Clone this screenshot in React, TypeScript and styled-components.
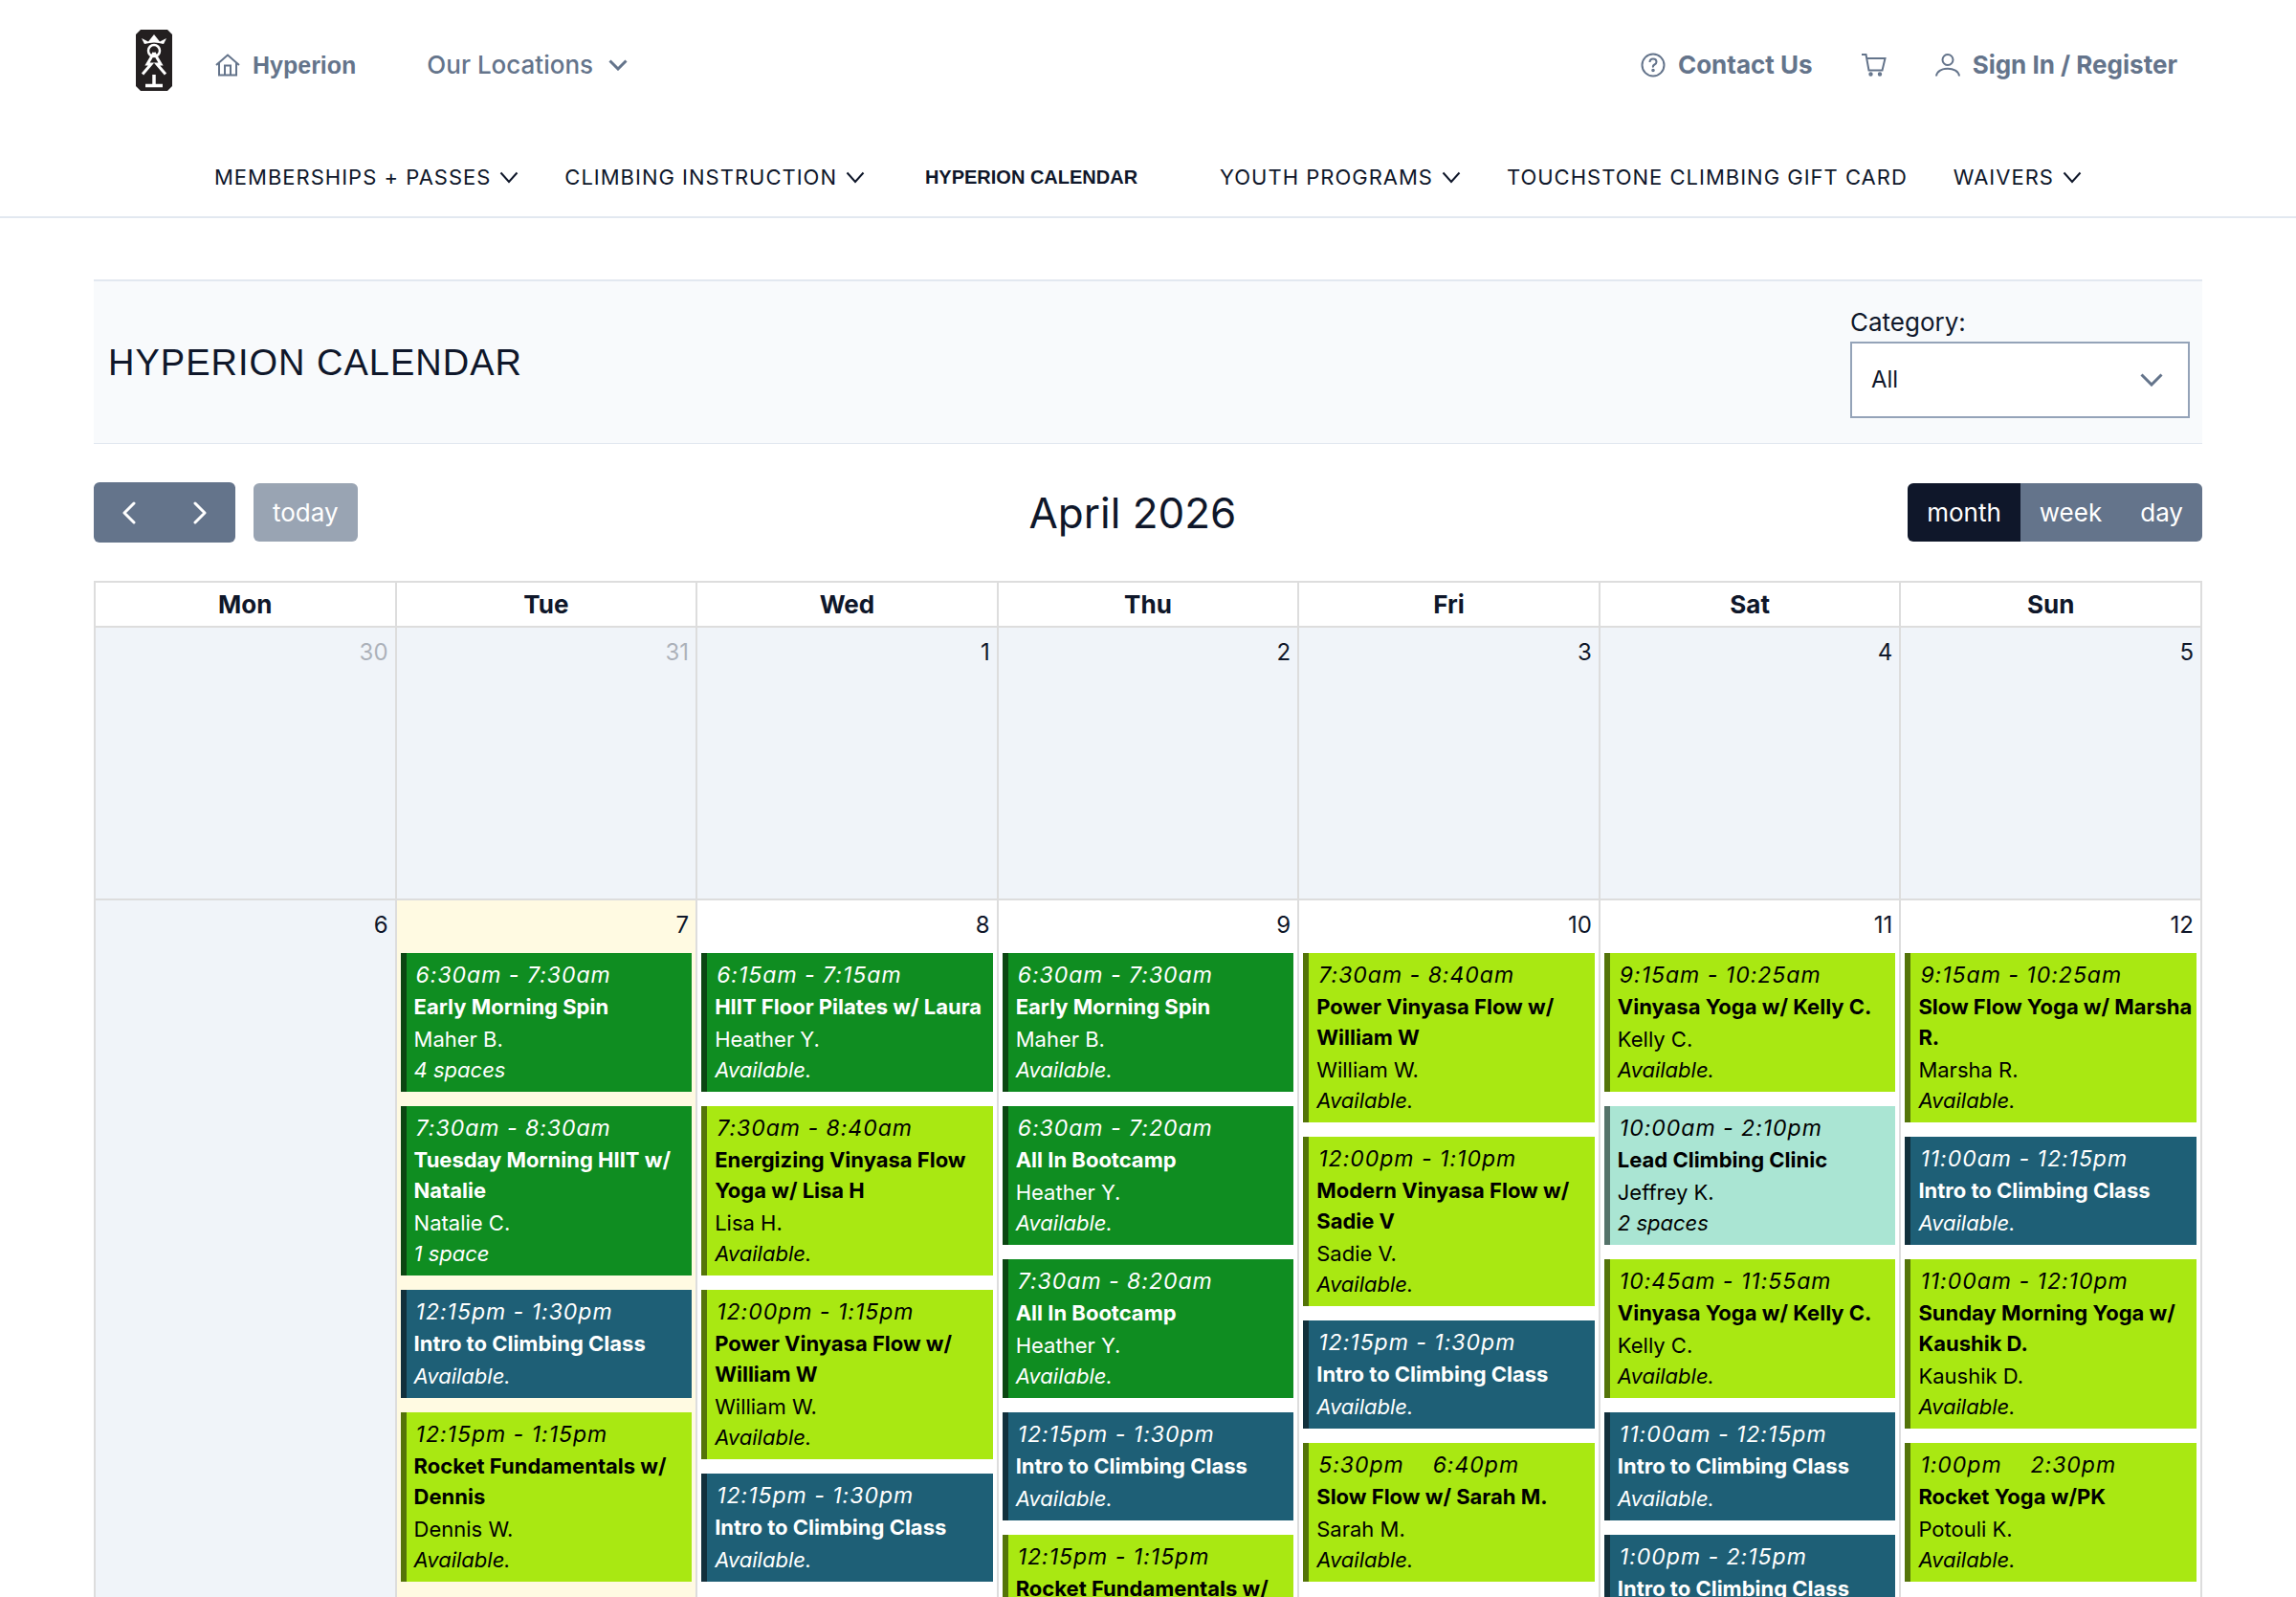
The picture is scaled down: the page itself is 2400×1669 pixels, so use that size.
import React from "react";
import styled, { createGlobalStyle } from "styled-components";

const INK = "#0f172a";
const SLATE = "#64748b";
const LINE = "#dddddd";

const GlobalStyle = createGlobalStyle`
  *, *::before, *::after { box-sizing: border-box; }
  body {
    margin: 0;
    background: #fff;
    color: ${INK};
    font-family: Inter, "Liberation Sans", sans-serif;
    font-size: 24px;
    line-height: 32px;
  }
  button, select { font: inherit; }
  a { color: inherit; text-decoration: none; }
`;

const Page = styled.div`
  height: 100vh;
  overflow: hidden;
`;

const Header = styled.header`
  border-bottom: 2px solid #e2e8f0;
`;

const TopBar = styled.div`
  display: flex;
  align-items: center;
  padding: 31px 124px 0 142px;
  color: ${SLATE};
  font-size: 26px;
`;

const LogoLink = styled.a`
  display: flex;
  margin-right: 45px;
`;

const TopGroup = styled.div<{ $gap: number; $end?: boolean }>`
  display: flex;
  align-items: center;
  gap: ${(p) => p.$gap}px;
  margin-left: ${(p) => (p.$end ? "auto" : "0")};
  padding-top: 10px;
`;

const TopLink = styled.a<{ $weight: number }>`
  display: inline-flex;
  align-items: center;
  gap: 13px;
  font-weight: ${(p) => p.$weight};
`;

const SiteLink = styled(TopLink)`
  font-family: "Liberation Sans", Arial, sans-serif;
  font-size: 25px;
`;

const LocationsButton = styled.button`
  display: inline-flex;
  align-items: center;
  gap: 16px;
  padding: 0;
  border: 0;
  background: none;
  color: inherit;
  font-weight: 500;
`;

const Nav = styled.nav`
  display: flex;
  justify-content: space-between;
  align-items: center;
  padding: 74px 224px 25px;
`;

const NavItem = styled.a`
  display: inline-flex;
  align-items: center;
  gap: 9px;
  font-size: 22px;
  letter-spacing: 1px;
  white-space: nowrap;
`;

const CurrentNavItem = styled(NavItem)`
  padding: 0 38px 0 15px;
  font-family: "Liberation Sans", Arial, sans-serif;
  font-size: 20px;
  font-weight: 700;
  letter-spacing: 0;
`;

const Main = styled.main`
  padding: 64px 98px 0;
`;

const TitleBar = styled.section`
  display: flex;
  align-items: center;
  justify-content: space-between;
  padding: 26px 13px 26px 15px;
  border-top: 2px solid #e2e8f0;
  border-bottom: 1px solid #e2e8f0;
  background: #f8fafc;
`;

const PageTitle = styled.h1`
  margin: 0;
  font-family: "Liberation Sans", Arial, sans-serif;
  font-size: 38px;
  font-weight: 400;
  line-height: 48px;
  letter-spacing: 1px;
`;

const Field = styled.div`
  display: flex;
  flex-direction: column;
  width: 355px;
`;

const FieldLabel = styled.label`
  padding: 1px 0 4px;
  font-size: 26px;
`;

const SelectWrap = styled.div`
  display: grid;
  align-items: center;
  color: ${SLATE};
  & > * { grid-area: 1 / 1; }
  & > svg { justify-self: end; margin-right: 28px; pointer-events: none; }
`;

const Select = styled.select`
  appearance: none;
  width: 100%;
  height: 80px;
  padding: 0 20px;
  border: 2px solid #94a3b8;
  border-radius: 0;
  background: #fff;
  color: ${INK};
`;

const Toolbar = styled.div`
  display: flex;
  align-items: center;
  justify-content: space-between;
  padding: 40px 0;
`;

const ToolGroup = styled.div`
  display: flex;
  align-items: center;
  gap: 19px;
`;

const ButtonGroup = styled.div`
  display: flex;
  overflow: hidden;
  border-radius: 6px;
`;

const ToolButton = styled.button<{ $active?: boolean }>`
  display: flex;
  align-items: center;
  height: 61px;
  padding: 0 20px;
  border: 0;
  background: ${(p) => (p.$active ? INK : SLATE)};
  color: #fff;
  font-size: 26px;
`;

const ArrowButton = styled(ToolButton)`
  height: 63px;
  justify-content: center;
  width: 74px;
`;

const TodayButton = styled(ToolButton)`
  border-radius: 6px;
  opacity: 0.65;
`;

const MonthTitle = styled.h2`
  margin: 0;
  font-size: 44px;
  font-weight: 400;
  line-height: 56px;
`;

const Calendar = styled.table`
  width: 100%;
  table-layout: fixed;
  border-collapse: collapse;
`;

const HeadCell = styled.th`
  height: 47px;
  padding: 0;
  border: 2px solid ${LINE};
  font-size: 26px;
  font-weight: 700;
`;

type Tone = "muted" | "today" | "plain";
const toneColor: Record<Tone, string> = {
  muted: "#f0f4f9",
  today: "#fffae2",
  plain: "#ffffff",
};

const DayCell = styled.td<{ $tone: Tone }>`
  height: 285px;
  padding: 4px 4px 0;
  border: 2px solid ${LINE};
  background: ${(p) => toneColor[p.$tone]};
  vertical-align: top;
`;

const DayNumber = styled.div<{ $outside?: boolean }>`
  padding: 6px 3px 13px;
  text-align: right;
  opacity: ${(p) => (p.$outside ? 0.3 : 1)};
`;

const EventList = styled.div`
  display: flex;
  flex-direction: column;
  gap: 15px;
`;

type Kind = "fitness" | "yoga" | "climb" | "clinic";
const kinds: Record<Kind, { bg: string; edge: string; fg: string }> = {
  fitness: { bg: "#0f8d21", edge: "#0c4612", fg: "#fff" },
  yoga: { bg: "#a9e812", edge: "#547409", fg: "#000" },
  climb: { bg: "#1e5f76", edge: "#12303c", fg: "#fff" },
  clinic: { bg: "#aae5d3", edge: "#55736a", fg: "#000" },
};

const EventCard = styled.a<{ $kind: Kind }>`
  display: block;
  padding: 7px 0 7px 8px;
  border-left: 6px solid ${(p) => kinds[p.$kind].edge};
  background: ${(p) => kinds[p.$kind].bg};
  color: ${(p) => kinds[p.$kind].fg};
  font-size: 22px;
`;

const EventTime = styled.div`
  padding-left: 2px;
  font-size: 23px;
  line-height: 33px;
  font-style: italic;
  letter-spacing: 1px;
`;

const EventTitle = styled.div`
  padding-bottom: 2px;
  font-weight: 700;
`;

const EventText = styled.div``;

const EventSpaces = styled.div`
  font-style: italic;
`;

type Ev = { k: Kind; time: string; title: string; who?: string; left?: string };

const e = (k: Kind, time: string, title: string, who?: string, left = "Available."): Ev => ({
  k, time, title, who, left,
});

type Day = { n: number; tone: Tone; outside?: boolean; events?: Ev[] };

const INTRO = "Intro to Climbing Class";

const weeks: Day[][] = [
  [
    { n: 30, tone: "muted", outside: true },
    { n: 31, tone: "muted", outside: true },
    { n: 1, tone: "muted" },
    { n: 2, tone: "muted" },
    { n: 3, tone: "muted" },
    { n: 4, tone: "muted" },
    { n: 5, tone: "muted" },
  ],
  [
    { n: 6, tone: "muted" },
    {
      n: 7,
      tone: "today",
      events: [
        e("fitness", "6:30am - 7:30am", "Early Morning Spin", "Maher B.", "4 spaces"),
        e("fitness", "7:30am - 8:30am", "Tuesday Morning HIIT w/ Natalie", "Natalie C.", "1 space"),
        e("climb", "12:15pm - 1:30pm", INTRO),
        e("yoga", "12:15pm - 1:15pm", "Rocket Fundamentals w/ Dennis", "Dennis W."),
      ],
    },
    {
      n: 8,
      tone: "plain",
      events: [
        e("fitness", "6:15am - 7:15am", "HIIT Floor Pilates w/ Laura", "Heather Y."),
        e("yoga", "7:30am - 8:40am", "Energizing Vinyasa Flow Yoga w/ Lisa H", "Lisa H."),
        e("yoga", "12:00pm - 1:15pm", "Power Vinyasa Flow w/ William W", "William W."),
        e("climb", "12:15pm - 1:30pm", INTRO),
      ],
    },
    {
      n: 9,
      tone: "plain",
      events: [
        e("fitness", "6:30am - 7:30am", "Early Morning Spin", "Maher B."),
        e("fitness", "6:30am - 7:20am", "All In Bootcamp", "Heather Y."),
        e("fitness", "7:30am - 8:20am", "All In Bootcamp", "Heather Y."),
        e("climb", "12:15pm - 1:30pm", INTRO),
        e("yoga", "12:15pm - 1:15pm", "Rocket Fundamentals w/ Dennis", "Dennis W."),
      ],
    },
    {
      n: 10,
      tone: "plain",
      events: [
        e("yoga", "7:30am - 8:40am", "Power Vinyasa Flow w/ William W", "William W."),
        e("yoga", "12:00pm - 1:10pm", "Modern Vinyasa Flow w/ Sadie V", "Sadie V."),
        e("climb", "12:15pm - 1:30pm", INTRO),
        e("yoga", "5:30pm\u00a0\u00a0\u00a0 6:40pm", "Slow Flow w/ Sarah M.", "Sarah M."),
      ],
    },
    {
      n: 11,
      tone: "plain",
      events: [
        e("yoga", "9:15am - 10:25am", "Vinyasa Yoga w/ Kelly C.", "Kelly C."),
        e("clinic", "10:00am - 2:10pm", "Lead Climbing Clinic", "Jeffrey K.", "2 spaces"),
        e("yoga", "10:45am - 11:55am", "Vinyasa Yoga w/ Kelly C.", "Kelly C."),
        e("climb", "11:00am - 12:15pm", INTRO),
        e("climb", "1:00pm - 2:15pm", INTRO),
      ],
    },
    {
      n: 12,
      tone: "plain",
      events: [
        e("yoga", "9:15am - 10:25am", "Slow Flow Yoga w/ Marsha R.", "Marsha R."),
        e("climb", "11:00am - 12:15pm", INTRO),
        e("yoga", "11:00am - 12:10pm", "Sunday Morning Yoga w/ Kaushik D.", "Kaushik D."),
        e("yoga", "1:00pm\u00a0\u00a0\u00a0 2:30pm", "Rocket Yoga w/PK", "Potouli K."),
      ],
    },
  ],
];

const Stroke = styled.svg<{ $w?: number }>`
  flex: none;
  fill: none;
  stroke: currentColor;
  stroke-width: ${(p) => p.$w ?? 2};
`;

const Logo = () => (
  <svg width="38" height="64" viewBox="0 0 38 64" aria-hidden="true">
    <path d="M5 0H33L38 5V59L33 64H5L0 59V5Z" fill="#231f20" />
    <path d="M6 9L13 12.500L19 5L25 12.500L32 9L29 15Q19 12 9 15Z" fill="#fff" />
    <g fill="none" stroke="#fff">
      <circle cx="19" cy="22" r="6" strokeWidth="2.500" />
      <path d="M19 24L12 36H16L7 46.500M19 24L26 36H22L31 46.500" strokeWidth="3" />
      <path d="M19 47V58M10 58.500H28" strokeWidth="3.500" />
    </g>
  </svg>
);

const HomeIcon = () => (
  <Stroke width="26" height="24" viewBox="0 0 26 24" aria-hidden="true">
    <path d="M1 12L13 1.500L25 12M4 9.500V22.500H22V9.500M10 22V12.500H16V22" />
  </Stroke>
);

const HelpIcon = () => (
  <Stroke width="26" height="26" viewBox="0 0 26 26" aria-hidden="true">
    <circle cx="13" cy="13" r="11.500" />
    <path d="M9.500 10Q9.500 6.500 13 6.500T16.500 9.800Q16.500 11.500 14.500 12.500T13 15.500" />
    <circle cx="13" cy="18.500" r="0.800" />
  </Stroke>
);

const CartIcon = () => (
  <Stroke width="26" height="24" viewBox="0 0 26 24" aria-hidden="true">
    <path d="M0 1H4.500L7.500 17.500H21.500L24.500 5H5.500" />
    <circle cx="9.500" cy="21.500" r="1.200" />
    <circle cx="19" cy="21.500" r="1.200" />
  </Stroke>
);

const UserIcon = () => (
  <Stroke width="26" height="24" viewBox="0 0 26 24" aria-hidden="true">
    <circle cx="13" cy="6.500" r="5.500" />
    <path d="M1 23.500C2 13 24 13 25 23.500" />
  </Stroke>
);

const Down = ({ w, h, s }: { w: number; h: number; s: number }) => (
  <Stroke $w={s} width={w} height={h} viewBox={`0 0 ${w} ${h}`} aria-hidden="true">
    <path d={`M1.500 1.500L${w / 2} ${h - 2}L${w - 1.5} 1.500`} />
  </Stroke>
);

const Side = ({ next }: { next?: boolean }) => (
  <Stroke $w={3} width="14" height="24" viewBox="0 0 14 24" strokeLinecap="round" strokeLinejoin="round" aria-hidden="true">
    <path d={next ? "M2 2L12 12L2 22" : "M12 2L2 12L12 22"} />
  </Stroke>
);

const navItems = [
  { label: "MEMBERSHIPS + PASSES", menu: true },
  { label: "CLIMBING INSTRUCTION", menu: true },
  { label: "HYPERION CALENDAR", current: true },
  { label: "YOUTH PROGRAMS", menu: true },
  { label: "TOUCHSTONE CLIMBING GIFT CARD" },
  { label: "WAIVERS", menu: true },
];

export default function App() {
  return (
    <Page>
      <GlobalStyle />
      <Header>
        <TopBar>
          <LogoLink href="#" aria-label="Touchstone"><Logo /></LogoLink>
          <TopGroup $gap={74}>
            <SiteLink href="#" $weight={700}><HomeIcon />Hyperion</SiteLink>
            <LocationsButton type="button">Our Locations<Down w={20} h={12} s={3} /></LocationsButton>
          </TopGroup>
          <TopGroup $gap={51} $end>
            <TopLink href="#" $weight={700}><HelpIcon />Contact Us</TopLink>
            <TopLink href="#" $weight={700} aria-label="Cart"><CartIcon /></TopLink>
            <TopLink href="#" $weight={700}><UserIcon />Sign In / Register</TopLink>
          </TopGroup>
        </TopBar>
        <Nav>
          {navItems.map((n) =>
            n.current ? (
              <CurrentNavItem key={n.label} href="#" aria-current="page">{n.label}</CurrentNavItem>
            ) : (
              <NavItem key={n.label} href="#">
                {n.label}
                {n.menu && <Down w={20} h={13} s={2} />}
              </NavItem>
            )
          )}
        </Nav>
      </Header>
      <Main>
        <TitleBar>
          <PageTitle>HYPERION CALENDAR</PageTitle>
          <Field>
            <FieldLabel htmlFor="category">Category:</FieldLabel>
            <SelectWrap>
              <Select id="category" defaultValue="All"><option>All</option></Select>
              <Down w={24} h={14} s={3} />
            </SelectWrap>
          </Field>
        </TitleBar>
        <Toolbar>
          <ToolGroup>
            <ButtonGroup>
              <ArrowButton type="button" aria-label="Previous month"><Side /></ArrowButton>
              <ArrowButton type="button" aria-label="Next month"><Side next /></ArrowButton>
            </ButtonGroup>
            <TodayButton type="button" disabled>today</TodayButton>
          </ToolGroup>
          <MonthTitle>April 2026</MonthTitle>
          <ButtonGroup>
            <ToolButton type="button" $active>month</ToolButton>
            <ToolButton type="button">week</ToolButton>
            <ToolButton type="button">day</ToolButton>
          </ButtonGroup>
        </Toolbar>
        <Calendar>
          <thead>
            <tr>
              {["Mon", "Tue", "Wed", "Thu", "Fri", "Sat", "Sun"].map((d) => (
                <HeadCell key={d} scope="col">{d}</HeadCell>
              ))}
            </tr>
          </thead>
          <tbody>
            {weeks.map((week, w) => (
              <tr key={w}>
                {week.map((d) => (
                  <DayCell key={d.n} $tone={d.tone}>
                    <DayNumber $outside={d.outside}>{d.n}</DayNumber>
                    <EventList>
                      {d.events?.map((ev, i) => (
                        <EventCard key={i} href="#" $kind={ev.k}>
                          <EventTime>{ev.time}</EventTime>
                          <EventTitle>{ev.title}</EventTitle>
                          {ev.who && <EventText>{ev.who}</EventText>}
                          <EventSpaces>{ev.left}</EventSpaces>
                        </EventCard>
                      ))}
                    </EventList>
                  </DayCell>
                ))}
              </tr>
            ))}
          </tbody>
        </Calendar>
      </Main>
    </Page>
  );
}
